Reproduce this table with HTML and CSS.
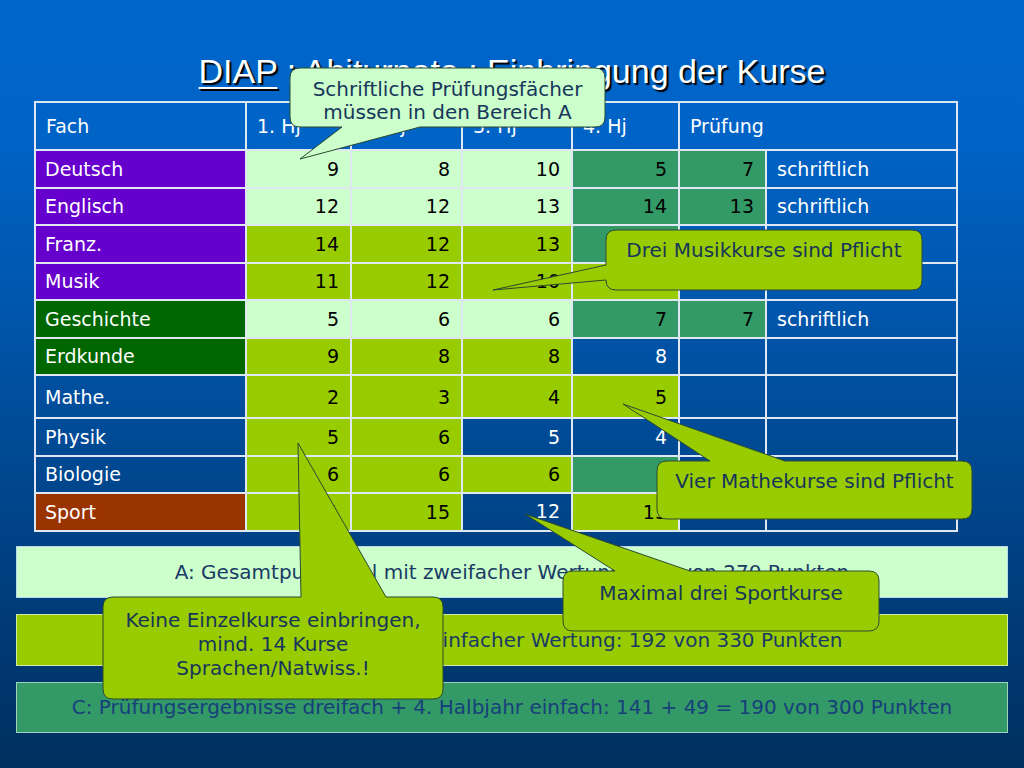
FILE: index.html
```html
<!DOCTYPE html>
<html lang="de">
<head>
<meta charset="utf-8">
<title>DIAP : Abiturnote : Einbringung der Kurse</title>
<link rel="stylesheet" href="styles.css">
</head>
<body>
<div class="slide">
  <h1 class="title"><u>DIAP</u> : Abiturnote : Einbringung der Kurse</h1>

  <table class="grades">
    <colgroup>
      <col class="c-fach"><col class="c-h1"><col class="c-h2"><col class="c-h3"><col class="c-h4"><col class="c-pr"><col class="c-art">
    </colgroup>
    <thead>
      <tr class="r-head"><th>Fach</th><th>1. Hj</th><th>2. Hj</th><th>3. Hj</th><th>4. Hj</th><th colspan="2">Prüfung</th></tr>
    </thead>
    <tbody>
      <tr><td class="f purple">Deutsch</td><td class="n lg">9</td><td class="n lg">8</td><td class="n lg">10</td><td class="n sg">5</td><td class="n sg">7</td><td class="t">schriftlich</td></tr>
      <tr><td class="f purple">Englisch</td><td class="n lg">12</td><td class="n lg">12</td><td class="n lg">13</td><td class="n sg">14</td><td class="n sg">13</td><td class="t">schriftlich</td></tr>
      <tr><td class="f purple">Franz.</td><td class="n yg">14</td><td class="n yg">12</td><td class="n yg">13</td><td class="n sg">13</td><td class="n"></td><td class="t"></td></tr>
      <tr><td class="f purple">Musik</td><td class="n yg">11</td><td class="n yg">12</td><td class="n yg">10</td><td class="n yg">10</td><td class="n"></td><td class="t"></td></tr>
      <tr><td class="f dkgreen">Geschichte</td><td class="n lg">5</td><td class="n lg">6</td><td class="n lg">6</td><td class="n sg">7</td><td class="n sg">7</td><td class="t">schriftlich</td></tr>
      <tr><td class="f dkgreen">Erdkunde</td><td class="n yg">9</td><td class="n yg">8</td><td class="n yg">8</td><td class="n w">8</td><td class="n"></td><td class="t"></td></tr>
      <tr class="r-tall"><td class="f">Mathe.</td><td class="n yg">2</td><td class="n yg">3</td><td class="n yg">4</td><td class="n yg">5</td><td class="n"></td><td class="t"></td></tr>
      <tr><td class="f">Physik</td><td class="n yg">5</td><td class="n yg">6</td><td class="n w">5</td><td class="n w">4</td><td class="n"></td><td class="t"></td></tr>
      <tr><td class="f">Biologie</td><td class="n yg">6</td><td class="n yg">6</td><td class="n yg">6</td><td class="n sg"></td><td class="n"></td><td class="t"></td></tr>
      <tr><td class="f brown">Sport</td><td class="n yg">11</td><td class="n yg">15</td><td class="n w up">12</td><td class="n yg">13</td><td class="n"></td><td class="t"></td></tr>
    </tbody>
  </table>

  <div class="sums">
    <div class="sum sum-a">A: Gesamtpunktzahl mit zweifacher Wertung: 186 von 270 Punkten</div>
    <div class="sum sum-b">B: Gesamtpunktzahl mit einfacher Wertung: 192 von 330 Punkten</div>
    <div class="sum sum-c">C: Prüfungsergebnisse dreifach + 4. Halbjahr einfach: 141 + 49 = 190 von 300 Punkten</div>
  </div>

  <svg class="callouts" width="1024" height="768" viewBox="0 0 1024 768" aria-hidden="true">
    <path class="co-light" d="M300,68 H595 Q605,68 605,78 V117 Q605,127 595,127 H420 L300,159 L342,127 H300 Q290,127 290,117 V78 Q290,68 300,68 Z"/>
    <path class="co-lime" d="M616,230 H912 Q922,230 922,240 V280 Q922,290 912,290 H616 Q606,290 606,280 L493,290 L606,265 V240 Q606,230 616,230 Z"/>
    <path class="co-lime" d="M667,461 H710 L623,404 L785,461 H962 Q972,461 972,471 V509 Q972,519 962,519 H667 Q657,519 657,509 V471 Q657,461 667,461 Z"/>
    <path class="co-lime" d="M573,571 H615 L525,514 L690,571 H869 Q879,571 879,581 V621 Q879,631 869,631 H573 Q563,631 563,621 V581 Q563,571 573,571 Z"/>
    <path class="co-lime" d="M113,597 H301 L298,443 L386,597 H433 Q443,597 443,607 V689 Q443,699 433,699 H113 Q103,699 103,689 V607 Q103,597 113,597 Z"/>
  </svg>

  <div class="note note-1">Schriftliche Prüfungsfächer<br>müssen in den Bereich A</div>
  <div class="note note-2">Drei Musikkurse sind Pflicht</div>
  <div class="note note-3">Vier Mathekurse sind Pflicht</div>
  <div class="note note-4">Maximal drei Sportkurse</div>
  <div class="note note-5">Keine Einzelkurse einbringen,<br>mind. 14 Kurse<br>Sprachen/Natwiss.!</div>
</div>
</body>
</html>
```

FILE: styles.css
```css
html, body {
  margin: 0;
  padding: 0;
}

body {
  width: 1024px;
  height: 768px;
  overflow: hidden;
  font-family: "DejaVu Sans", Verdana, sans-serif;
  background: linear-gradient(180deg, #0066cc 0%, #0063c6 18%, #0056ac 40%, #00478f 62%, #003a76 82%, #00305f 100%);
}

.slide {
  position: relative;
  width: 1024px;
  height: 768px;
}

.title {
  margin: 0;
  padding-top: 51px;
  height: 40px;
  font-family: "Liberation Sans", Arial, sans-serif;
  font-size: 34px;
  line-height: 40px;
  font-weight: normal;
  color: #ffffff;
  text-align: center;
  text-shadow: 2px 2px 1px #000000;
}

.title u {
  text-decoration-thickness: 2px;
  text-underline-offset: 4px;
}

/* ---------- table ---------- */
.grades {
  margin: 10px 0 0 34px;
  width: 922px;
  border-collapse: collapse;
  table-layout: fixed;
  font-size: 19px;
  color: #ffffff;
}

.c-fach { width: 211px; }
.c-h1 { width: 105px; }
.c-h2 { width: 111px; }
.c-h3 { width: 110px; }
.c-h4 { width: 107px; }
.c-pr { width: 87px; }
.c-art { width: 191px; }

.grades th,
.grades td {
  border: 2px solid #dfe8f2;
  padding: 0 10px;
  height: 37.5px;
  box-sizing: border-box;
  font-weight: normal;
  text-align: left;
  white-space: nowrap;
  overflow: hidden;
}

.grades .r-head th {
  height: 48px;
}

.grades .r-tall td {
  height: 43px;
}

.grades td.f {
  padding-left: 9px;
}

.grades td.n {
  text-align: right;
  padding-right: 11px;
  color: #000000;
}

.grades td.n.w {
  color: #ffffff;
}

.grades td.up {
  vertical-align: top;
  padding-top: 6px;
}

.purple { background: #6600cc; }
.dkgreen { background: #006600; }
.brown { background: #993300; }
.lg { background: #ccffcc; }
.yg { background: #99cc00; }
.sg { background: #339966; }

/* ---------- sum boxes ---------- */
.sums {
  margin: 14px 16px 0 16px;
  display: flex;
  flex-direction: column;
  gap: 16px;
}

.sum {
  height: 52px;
  box-sizing: border-box;
  border: 1px solid #b9d8ee;
  display: flex;
  align-items: center;
  justify-content: center;
  font-size: 20px;
  color: #1a3a66;
  white-space: nowrap;
}

.sum-a { background: #ccffcc; }
.sum-b { background: #99cc00; border-color: #d4e9a8; }
.sum-c { background: #339966; height: 51px; color: #17407a; border-color: #9fd3c0; }

/* ---------- callouts ---------- */
.callouts {
  position: absolute;
  left: 0;
  top: 0;
}

.callouts path {
  stroke: #2c4a30;
  stroke-width: 1;
  stroke-linejoin: round;
}

.co-light { fill: #ccffcc; }
.co-lime { fill: #99cc00; }

.note {
  position: absolute;
  text-align: center;
  font-size: 20px;
  line-height: 23px;
  color: #17365a;
  white-space: nowrap;
}

.note-1 { left: 290px; top: 78px; width: 315px; }
.note-2 { left: 606px; top: 239px; width: 316px; }
.note-3 { left: 657px; top: 470px; width: 315px; }
.note-4 { left: 563px; top: 582px; width: 316px; }
.note-5 { left: 103px; top: 608px; width: 340px; line-height: 24px; }
```
